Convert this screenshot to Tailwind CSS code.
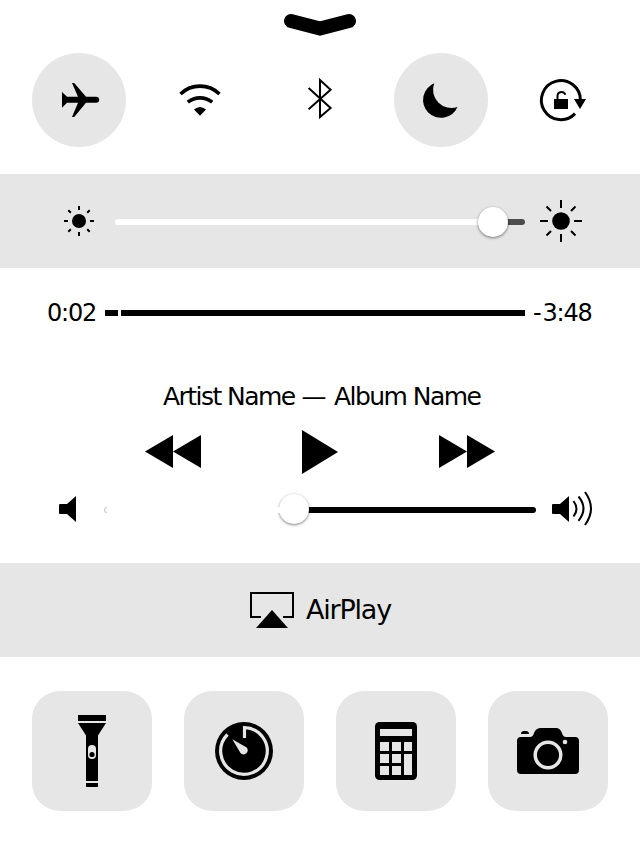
<!DOCTYPE html>
<html lang="en">
<head>
<meta charset="utf-8">
<title>Control Center</title>
<script src="https://cdn.jsdelivr.net/npm/@tailwindcss/browser@4"></script>
</head>
<body class="w-[640px] h-[855px] overflow-hidden bg-white text-black font-['DejaVu_Sans',sans-serif]">
<header class="h-[174px] flex flex-col items-center pt-[13px]">
  <svg class="block shrink-0" width="76" height="24" viewBox="282 13 76 24"><path d="M291 21L320 28.500L349 21" fill="none" stroke="#000" stroke-width="14" stroke-linecap="round"/></svg>
  <div class="mt-4 w-full px-8 flex justify-between">
    <button class="size-[94px] rounded-full bg-[#e6e6e6]" aria-label="Airplane mode"><svg width="94" height="94" viewBox="32 53 94 94"><path d="M62 92L67 96.800H78L72 83H74.200L86 96.800H96Q99.200 97 99.200 99.800T96 102.800H86L74.200 117H72L78 102.800H67L62 107.800Z"/></svg></button>
    <button class="size-[94px]" aria-label="Wi-Fi"><svg width="94" height="94" viewBox="153 53 94 94"><g fill="none" stroke="#000" stroke-width="3.600"><path d="M180.500 94A28 28 0 0 1 219.500 94"/><path d="M187.800 102.200A19.500 19.500 0 0 1 212.200 102.200"/></g><path d="M194 109.500Q200 104.500 206 109.500L200 115.800Z"/></svg></button>
    <button class="size-[94px]" aria-label="Bluetooth"><svg width="94" height="94" viewBox="273 53 94 94"><path d="M308.600 88L330.600 108L320 117V80L330.600 89.800L308.600 109.200" fill="none" stroke="#000" stroke-width="2"/></svg></button>
    <button class="size-[94px] rounded-full bg-[#e6e6e6]" aria-label="Do not disturb"><svg width="94" height="94" viewBox="394 53 94 94"><path d="M434.200 83.300A17.950 17.950 0 1 0 457.500 107A18.300 18.300 0 0 1 434.200 83.300Z"/></svg></button>
    <button class="size-[94px]" aria-label="Rotation lock"><svg width="94" height="94" viewBox="514 53 94 94"><path d="M580.400 100A19.500 19.500 0 1 0 575 113.600" fill="none" stroke="#000" stroke-width="3"/><path d="M574 99H586L580 109ZM554 99H568V109H554Z"/><path d="M557.500 100V95.500A4 4 0 0 1 565.300 94.700" fill="none" stroke="#000" stroke-width="2"/></svg></button>
  </div>
</header>
<section class="h-[94px] bg-[#e6e6e6] flex items-center pl-[64px]">
  <svg class="shrink-0" width="30" height="30" viewBox="64 206 30 30"><circle cx="79" cy="221" r="7"/><path d="M64 221h4M90 221h4M79 206v4M79 232v4M68.300 210.300l2.500 2.500M87.200 212.800l2.500-2.500M68.300 231.700l2.500-2.500M87.200 229.200l2.500 2.500" stroke="#000" stroke-width="2"/></svg>
  <div class="ml-[21px] mt-[2px] w-[410px] h-1.5 flex items-center relative">
    <div class="w-[378px] h-1.5 rounded-l-full bg-white"></div>
    <div class="flex-1 h-1.5 rounded-r-full bg-[#4d4d4d]"></div>
    <div class="absolute left-[363px] -top-3 size-[30px] rounded-full bg-white shadow-[0_1px_3px_rgba(0,0,0,0.5)]"></div>
  </div>
  <svg class="ml-[15px] shrink-0" width="42" height="42" viewBox="540 200 42 42"><circle cx="561" cy="221" r="8.800"/><path d="M540 221h8M574 221h8M561 200v8M561 234v8M546.500 206.500l4.500 4.500M571 211l4.500-4.500M546.500 235.500l4.500-4.500M571 231l4.500 4.500" stroke="#000" stroke-width="2"/></svg>
</section>
<section class="h-[295px]">
  <div class="h-[90px] pl-[47px] flex items-center text-[24px] leading-none">
    <span class="w-[58px] tracking-[-1.2px]">0:02</span>
    <div class="w-[13px] h-1.5 bg-black"></div>
    <div class="ml-[3px] w-[404px] h-1.5 bg-black"></div>
    <span class="ml-2 tracking-[-1.2px] whitespace-nowrap"><span class="tracking-[0.8px]">-</span>3:48</span>
  </div>
  <div class="mt-[23px] h-8 pl-[163px] flex items-center text-[25px] tracking-[-1.55px] whitespace-pre"><span>Artist Name</span><span class="ml-[7px]">—</span><span class="ml-[9px]">Album Name</span></div>
  <div class="mt-[17px] h-[44px] px-[145px] flex items-center justify-between">
    <svg width="56" height="34" viewBox="0 0 56 34"><path d="M0 0H0ZM28 0V33L0 16.500ZM56 0V33L28 16.500Z"/></svg>
    <svg width="36" height="44" viewBox="0 0 36 44"><path d="M0 0L36 22L0 44Z"/></svg>
    <svg width="56" height="34" viewBox="0 0 56 34"><path d="M0 0L28 16.500L0 33ZM28 0L56 16.500L28 33Z"/></svg>
  </div>
  <div class="mt-[16px] h-[38px] pl-[59px] flex items-center">
    <svg class="shrink-0" width="17" height="26" viewBox="0 0 17 26"><path d="M1 8H8L17 0V26L8 18H1Q0 18 0 17V9Q0 8 1 8Z"/></svg>
    <div class="ml-7 mt-[2px] w-[432px] h-1.5 flex relative">
      <div class="w-[190px] h-1.5"><div class="h-1.5 w-[3px] rounded-l-[3px] border border-r-0 border-[#ccc]"></div></div>
      <div class="flex-1 h-1.5 rounded-r-full bg-black"></div>
      <div class="absolute left-[175px] top-[-13px] size-[30px] rounded-full bg-white shadow-[0_1px_3px_rgba(0,0,0,0.5)]"></div>
      <div class="absolute left-[171px] top-0 h-1.5 w-2 bg-white"></div>
    </div>
    <svg class="ml-4 shrink-0" width="42" height="36" viewBox="552 491 42 36"><path d="M553 504H560L569 496V522L560 514H553Q552 514 552 513V505Q552 504 553 504Z"/><path d="M573.500 501Q579.500 509 573.500 516.500M578.500 496.500Q588.500 508.500 578.500 520.800M585 492Q597 508.500 585 525" fill="none" stroke="#000" stroke-width="2"/></svg>
  </div>
</section>
<section class="h-[94px] bg-[#e6e6e6] flex items-center pl-[250px] text-[27px] leading-none">
  <svg class="shrink-0" width="44" height="36" viewBox="250 592 44 36"><path d="M261 617H251V593H293V617H283" fill="none" stroke="#000" stroke-width="2"/><path d="M272 610L288 628H256Z"/></svg>
  <span class="ml-3 -mt-0.5 tracking-[-1.2px]">AirPlay</span>
</section>
<footer class="px-8 pt-[34px] flex justify-between">
  <button class="size-[120px] rounded-[28px] bg-[#e6e6e6]" aria-label="Flashlight"><svg width="120" height="120" viewBox="32 691 120 120"><path d="M78 715H106V721H78ZM78 723H106L98 735.500V781H86V735.500ZM86 783H98V787H86Z"/><rect x="88" y="745" width="8" height="14" rx="4" fill="#e6e6e6"/><circle cx="92" cy="754.500" r="2.600"/></svg></button>
  <button class="size-[120px] rounded-[28px] bg-[#e6e6e6]" aria-label="Timer"><svg width="120" height="120" viewBox="184 691 120 120"><circle cx="244" cy="751" r="29"/><path d="M244.500 738V727.700A23.300 23.300 0 1 1 227.500 734.500" fill="none" stroke="#e6e6e6" stroke-width="3.200"/><path d="M232.300 739.200L246.700 747.500A4 4 0 1 1 240.500 753Z" fill="#e6e6e6"/></svg></button>
  <button class="size-[120px] rounded-[28px] bg-[#e6e6e6]" aria-label="Calculator"><svg width="120" height="120" viewBox="336 691 120 120"><rect x="375" y="722" width="42" height="58" rx="4.500"/><path fill="#e6e6e6" d="M380 729h32v7h-32zM380 742h9v9h-9zM392 742h9v9h-9zM404 742h8v9h-8zM380 754h9v9h-9zM392 754h9v9h-9zM404 754h8v21h-8zM380 766h9v9h-9zM392 766h9v9h-9z"/></svg></button>
  <button class="size-[120px] rounded-[28px] bg-[#e6e6e6]" aria-label="Camera"><svg width="120" height="120" viewBox="488 691 120 120"><path d="M521 737H530Q533 737 534 733Q536 728 541 728H556Q560 728 562 733Q563 737 566 737H575Q579 737 579 741V770Q579 774 575 774H521Q517 774 517 770V741Q517 737 521 737ZM521 734Q521 731 524 731H526Q529 731 529 734Z"/><circle cx="548" cy="755" r="12.800" fill="none" stroke="#e6e6e6" stroke-width="3.500"/><circle cx="565" cy="742" r="2.300" fill="#e6e6e6"/></svg></button>
</footer>
</body>
</html>
